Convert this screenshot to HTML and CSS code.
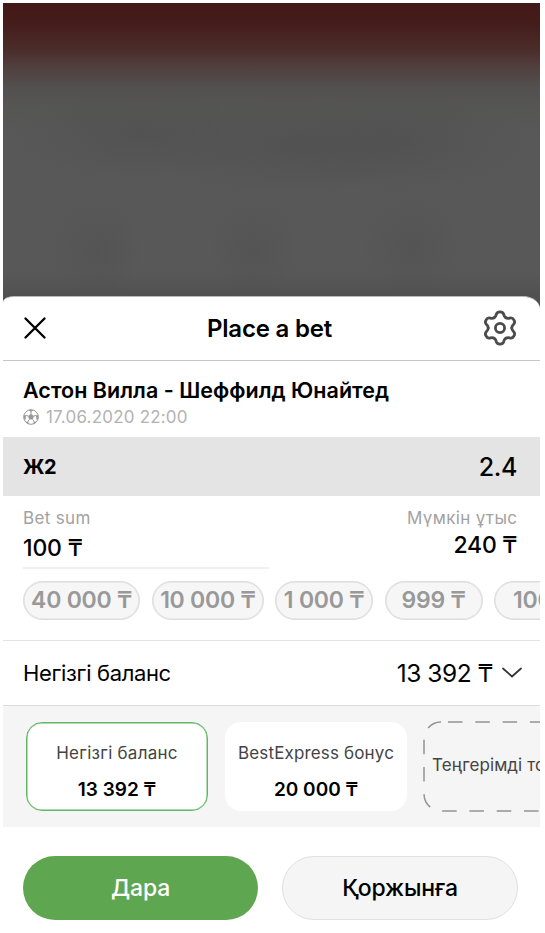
FILE: index.html
```html
<!DOCTYPE html>
<html lang="kk">
<head>
<meta charset="utf-8">
<title>Place a bet</title>
<link rel="stylesheet" href="styles.css">
</head>
<body>
<div class="screen">
  <div class="backdrop"></div>
  <main class="sheet">
    <header class="header">
      <svg class="close" viewBox="0 0 22 22"><path d="M1.500 1.500l19 19M20.500 1.500l-19 19"/></svg>
      <h1 class="title">Place a bet</h1>
      <svg class="gear" viewBox="-18 -18 36 36">
        <defs><path id="tooth" d="M-5.900-10.200C-4.200-11.200-4-12-3.800-13.200C-3.400-15.300-2-16.100 0-16.100S3.400-15.300 3.800-13.200C4-12 4.200-11.200 5.900-10.200"/></defs>
        <use href="#tooth"/>
        <use href="#tooth" transform="rotate(60)"/>
        <use href="#tooth" transform="rotate(120)"/>
        <use href="#tooth" transform="rotate(180)"/>
        <use href="#tooth" transform="rotate(240)"/>
        <use href="#tooth" transform="rotate(300)"/>
        <circle r="4.600"/>
      </svg>
    </header>
    <section class="match">
      <h2 class="teams">Астон Вилла - Шеффилд Юнайтед</h2>
      <div class="date">
        <svg class="ball" viewBox="-8 -8 16 16">
          <circle r="7.300"/>
          <path class="fill" d="M0-3.200L3-1L1.900 2.600H-1.900L-3-1ZM-2.800-7L0-5.200L2.800-7ZM7.300-2L5-1.400L5.400 2.500L7 2.500ZM-7.300-2L-5-1.400L-5.400 2.500L-7 2.500ZM2 7.300L2.700 5L5.500 4.500L4.500 6ZM-2 7.300L-2.700 5L-5.500 4.500L-4.500 6Z"/>
          <path d="M0-3V-6M3-1L5.500-1.700M1.900 2.600L3.300 5M-1.900 2.600L-3.300 5M-3-1L-5.500-1.700"/>
        </svg>
        <span class="date-text">17.06.2020 22:00</span>
      </div>
    </section>
    <section class="outcome"><span class="pick">Ж2</span><span class="odds">2.4</span></section>
    <section class="stake">
      <div class="amounts">
        <div class="sum"><div class="label">Bet sum</div><div class="value sum-value">100 ₸</div></div>
        <div class="win"><div class="label">Мүмкін ұтыс</div><div class="value">240 ₸</div></div>
      </div>
      <div class="chips">
        <span class="chip chip-xl">40 000 ₸</span>
        <span class="chip chip-l">10 000 ₸</span>
        <span class="chip">1 000 ₸</span>
        <span class="chip">999 ₸</span>
        <span class="chip">100 ₸</span>
      </div>
    </section>
    <section class="balance">
      <span class="balance-name">Негізгі баланс</span>
      <span class="balance-sum">13 392 ₸</span>
      <svg class="chevron" viewBox="0 0 20 12"><path d="M1 1.500l9 8 9-8"/></svg>
    </section>
    <section class="accounts">
      <div class="account selected"><span class="acc-name">Негізгі баланс</span><b class="acc-sum">13 392 ₸</b></div>
      <div class="account"><span class="acc-name bonus-name">BestExpress бонус</span><b class="acc-sum">20 000 ₸</b></div>
      <div class="topup">
        <svg class="dashes" viewBox="0 0 182 91"><path d="M18 1A17 17 0 0 0 1 18V73A17 17 0 0 0 18 90H164A17 17 0 0 0 181 73V18"/><path d="M25 1H164A17 17 0 0 1 181 18"/></svg>
        <span class="acc-name topup-name">Теңгерімді толтыру</span>
      </div>
    </section>
    <footer class="footer">
      <button class="btn primary">Дара</button>
      <button class="btn secondary">Қоржынға</button>
    </footer>
  </main>
</div>
</body>
</html>
```
FILE: styles.css
```css
* { box-sizing: border-box; }
body { margin: 0; background: #fff; font-family: Inter, "Noto Sans", sans-serif; color: #000; }
h1, h2 { margin: 0; }
svg { fill: none; flex: none; }
.screen { width: 537px; height: 930px; margin: 3px 0 0 3px; overflow: hidden; }
.backdrop {
  height: 308px;
  background:
    radial-gradient(ellipse 125px 45px at 137px 132px, #4e4e4e90, #4e4e4e00),
    radial-gradient(ellipse 140px 50px at 285px 142px, #4e4e4e90, #4e4e4e00),
    radial-gradient(ellipse 130px 50px at 395px 138px, #4e4e4e90, #4e4e4e00),
    radial-gradient(ellipse 45px 50px at 95px 248px, #50505080, #50505000),
    radial-gradient(ellipse 45px 50px at 251px 248px, #50505080, #50505000),
    radial-gradient(ellipse 50px 50px at 409px 245px, #50505080, #50505000),
    linear-gradient(#421916 0, #451d1b 22px, #4b2c2a 46px, #50403f 65px, #53504f 84px, #555554 102px, #585858 130px, #585858 270px, #505050 294px);
}
.sheet { margin-top: -15px; height: 637px; background: #fff; border-radius: 11px 17px 0 0 / 6px 13px 0 0; border-top: 1px solid #b9b9b9; }
.header { height: 64px; display: flex; align-items: center; justify-content: space-between; padding: 0 22px 1px 20px; border-bottom: 1px solid #c6c6c6; }
.close { width: 22px; height: 22px; stroke: #000; stroke-width: 2.300; stroke-linecap: round; margin: 0 11px 0 1px; }
.title { font-size: 24px; line-height: 30px; font-weight: 600; letter-spacing: -.2px; padding-top: 2px; }
.gear { width: 36px; height: 36px; stroke: #4b4b4b; stroke-width: 2.800; stroke-linecap: round; }
.match { height: 76px; padding: 15px 20px 0; }
.teams { font-size: 21.500px; line-height: 28px; font-weight: 600; letter-spacing: .03px; white-space: nowrap; }
.date { display: flex; align-items: center; gap: 7px; height: 25px; color: #b3b3b3; font-size: 17px; }
.ball { width: 16px; height: 16px; stroke: #999; stroke-width: 1; }
.ball .fill { fill: #999; stroke: none; }
.date-text { letter-spacing: .2px; }
.outcome { height: 59px; display: flex; justify-content: space-between; align-items: center; padding: 0 23px 0 20px; background: #e4e4e4; }
.pick { font-size: 20px; font-weight: 700; letter-spacing: -.3px; }
.odds { font-size: 25px; font-weight: 500; letter-spacing: -.4px; }
.stake { height: 144px; padding: 10px 0 0 20px; overflow: hidden; }
.amounts { display: flex; justify-content: space-between; padding-right: 23px; height: 75px; }
.sum { width: 246px; height: 63px; border-bottom: 2px solid #efefef; }
.win { text-align: right; }
.label { font-size: 17px; line-height: 24px; color: #a2a2a2; letter-spacing: .35px; margin-right: -.35px; }
.value { font-size: 23px; line-height: 30px; font-weight: 500; letter-spacing: -.3px; }
.sum-value { margin-top: 3px; letter-spacing: -.15px; }
.chips { display: flex; gap: 11.500px; }
.chip { flex: none; width: 98px; height: 39px; display: flex; align-items: center; justify-content: center; border: 1px solid #dcdcdc; box-shadow: inset 0 0 0 .6px #dcdcdc; border-radius: 20px; background: #f6f6f6; color: #999; font-size: 23px; font-weight: 600; letter-spacing: -.25px; white-space: nowrap; padding-bottom: 1px; }
.chip-xl { width: 117px; }
.chip-l { width: 112.500px; margin-right: -.5px; }
.balance { height: 66px; border-top: 1px solid #e3e3e3; border-bottom: 1px solid #dcdcdc; display: flex; align-items: center; padding: 0 18px 0 20px; }
.balance-name { font-size: 22px; letter-spacing: -.35px; flex: 1; }
.balance-sum { font-size: 24.500px; letter-spacing: -.45px; }
.chevron { width: 20px; height: 12px; margin-left: 9px; stroke: #333; stroke-width: 1.700; stroke-linecap: round; stroke-linejoin: round; }
.accounts { height: 121px; padding: 16px 0 0 23px; background: #f5f5f5; display: flex; gap: 17px; overflow: hidden; }
.account { flex: none; width: 182px; height: 89px; border-radius: 16px; background: #fff; display: flex; flex-direction: column; align-items: center; padding-top: 19px; }
.selected { border: 1px solid #62b767; box-shadow: inset 0 0 0 .5px #62b767; padding-top: 18px; }
.acc-name { font-size: 17px; line-height: 24px; color: #444; letter-spacing: .25px; white-space: nowrap; }
.bonus-name { letter-spacing: .15px; }
.acc-sum { font-size: 19px; line-height: 24px; font-weight: 600; margin-top: 13px; }
.topup { flex: none; display: grid; width: 182px; height: 91px; margin: -1px 0 0 -1px; align-items: center; }
.topup > * { grid-area: 1 / 1; }
.dashes { width: 182px; height: 91px; stroke: #929292; stroke-width: 1.500; stroke-dasharray: 14.500 12.800; }
.topup-name { padding: 0 0 3px 9px; letter-spacing: .1px; }
.footer { display: flex; gap: 24px; padding: 29px 20px 0; }
.btn { width: 235px; height: 63.500px; padding: 0; border: 0; border-radius: 32px; font: 500 23px/30px Inter, sans-serif; letter-spacing: -.15px; }
.primary { background: #5fa651; color: #fff; }
.secondary { width: 236px; background: #f5f5f5; border: 1px solid #e0e0e0; color: #000; }
```
